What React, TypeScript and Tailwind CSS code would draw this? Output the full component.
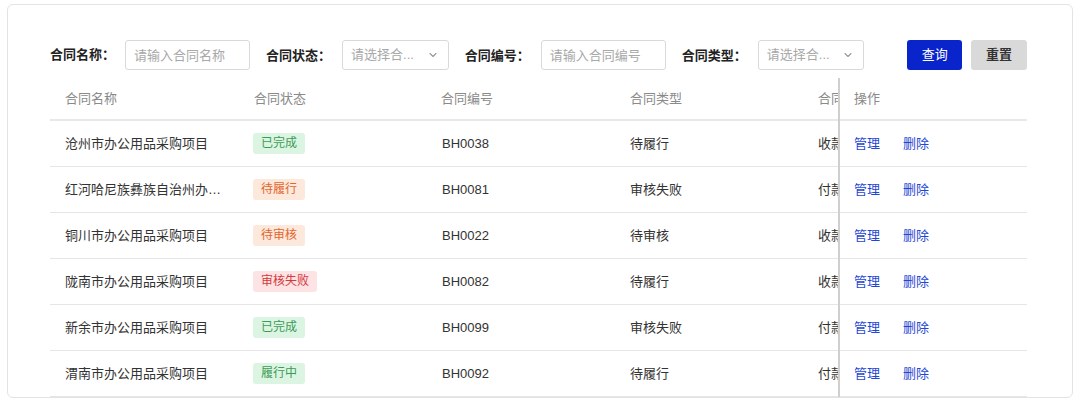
import React from 'react';

type Status = '已完成' | '待履行' | '待审核' | '审核失败' | '履行中';

type Contract = {
  name: string;
  status: Status;
  code: string;
  type: string;
  kind: string;
};

const contracts: Contract[] = [
  { name: '沧州市办公用品采购项目', status: '已完成', code: 'BH0038', type: '待履行', kind: '收款合同' },
  { name: '红河哈尼族彝族自治州办公用品采购项目', status: '待履行', code: 'BH0081', type: '审核失败', kind: '付款合同' },
  { name: '铜川市办公用品采购项目', status: '待审核', code: 'BH0022', type: '待审核', kind: '收款合同' },
  { name: '陇南市办公用品采购项目', status: '审核失败', code: 'BH0082', type: '待履行', kind: '收款合同' },
  { name: '新余市办公用品采购项目', status: '已完成', code: 'BH0099', type: '审核失败', kind: '付款合同' },
  { name: '渭南市办公用品采购项目', status: '履行中', code: 'BH0092', type: '待履行', kind: '付款合同' },
];

const tagStyles: Record<Status, string> = {
  已完成: 'bg-[#dcf5e2] text-[#3b9b58]',
  履行中: 'bg-[#dcf5e2] text-[#3b9b58]',
  待履行: 'bg-[#fde8dc] text-[#e2652c]',
  待审核: 'bg-[#fde8dc] text-[#e2652c]',
  审核失败: 'bg-[#fde3e3] text-[#d4383c]',
};

const Chevron = () => (
  <svg width="10" height="10" viewBox="0 0 10 10" fill="none" className="text-[#999]">
    <path d="M2 3.5L5 6.5L8 3.5" stroke="currentColor" strokeWidth="1.1" strokeLinecap="round" strokeLinejoin="round" />
  </svg>
);

const Label: React.FC<{ text: string }> = ({ text }) => (
  <span className="font-bold text-[13px] text-[#222] whitespace-nowrap">{text}：</span>
);

const App: React.FC = () => {
  return (
    <div
      className="w-[1080px] h-[404px] bg-white pt-[4px] px-[7px]"
      style={{ fontFamily: '"Liberation Sans", "Noto Sans CJK SC", sans-serif' }}
    >
      <div className="h-[394px] border border-[#e3e3e3] rounded-[6px] overflow-hidden pt-[35px] pl-[42px] pr-[45px]">
        {/* filters */}
        <div className="flex items-center h-[30px]">
          <Label text="合同名称" />
          <input
            placeholder="请输入合同名称"
            className="ml-[10px] w-[125px] h-[30px] border border-[#d9d9d9] rounded-[3px] px-[8px] text-[13px] placeholder:text-[#a8a8a8] outline-none"
          />
          <div className="ml-[16px]"><Label text="合同状态" /></div>
          <div className="ml-[11px] w-[107px] h-[30px] border border-[#d9d9d9] rounded-[3px] pl-[8px] pr-[10px] flex items-center justify-between text-[13px] text-[#a8a8a8]">
            <span>请选择合...</span>
            <Chevron />
          </div>
          <div className="ml-[16px]"><Label text="合同编号" /></div>
          <input
            placeholder="请输入合同编号"
            className="ml-[11px] w-[125px] h-[30px] border border-[#d9d9d9] rounded-[3px] px-[8px] text-[13px] placeholder:text-[#a8a8a8] outline-none"
          />
          <div className="ml-[16px]"><Label text="合同类型" /></div>
          <div className="ml-[11px] w-[107px] h-[30px] border border-[#d9d9d9] rounded-[3px] pl-[8px] pr-[10px] flex items-center justify-between text-[13px] text-[#a8a8a8]">
            <span>请选择合...</span>
            <Chevron />
          </div>
          <button className="ml-[43px] w-[55px] h-[30px] rounded-[3px] bg-[#0a24cc] text-white text-[13px]">查询</button>
          <button className="ml-[9px] w-[56px] h-[30px] rounded-[3px] bg-[#d9d9d9] text-[#333] font-bold text-[13px]">重置</button>
        </div>

        {/* table */}
        <div className="mt-[8px] flex w-[977px] text-[13px]">
          <div className="w-[788px] overflow-hidden">
            <div className="w-[960px]">
              <div className="flex h-[43px] items-center border-b-2 border-[#e8e8e8] text-[#8a8a8a]">
                <div className="w-[188px] pl-[15px]">合同名称</div>
                <div className="w-[188px] pl-[16px]">合同状态</div>
                <div className="w-[189px] pl-[15px]">合同编号</div>
                <div className="w-[188px] pl-[15px]">合同类型</div>
                <div className="w-[188px] pl-[15px] whitespace-nowrap">合同性质</div>
              </div>
              {contracts.map((c) => (
                <div key={c.code} className="flex h-[46px] items-center border-b border-[#e6e6e6] text-[#333]">
                  <div className="w-[188px] pl-[15px] pr-[12px] truncate">{c.name}</div>
                  <div className="w-[188px] pl-[15px]">
                    <span className={`inline-block h-[21px] leading-[21px] px-[8px] rounded-[3px] text-[12px] ${tagStyles[c.status]}`}>
                      {c.status}
                    </span>
                  </div>
                  <div className="w-[189px] pl-[16px]">{c.code}</div>
                  <div className="w-[188px] pl-[15px]">{c.type}</div>
                  <div className="w-[188px] pl-[15px] whitespace-nowrap">{c.kind}</div>
                </div>
              ))}
            </div>
          </div>
          <div className="w-[189px] border-l-2 border-[#cfcfcf]">
            <div className="flex h-[43px] items-center border-b-2 border-[#e8e8e8] text-[#8a8a8a] pl-[14px]">操作</div>
            {contracts.map((c) => (
              <div key={c.code} className="flex h-[46px] items-center border-b border-[#e6e6e6] pl-[14px] gap-[23px] text-[#1f47d4]">
                <span>管理</span>
                <span>删除</span>
              </div>
            ))}
          </div>
        </div>
      </div>
    </div>
  );
};

export default App;
